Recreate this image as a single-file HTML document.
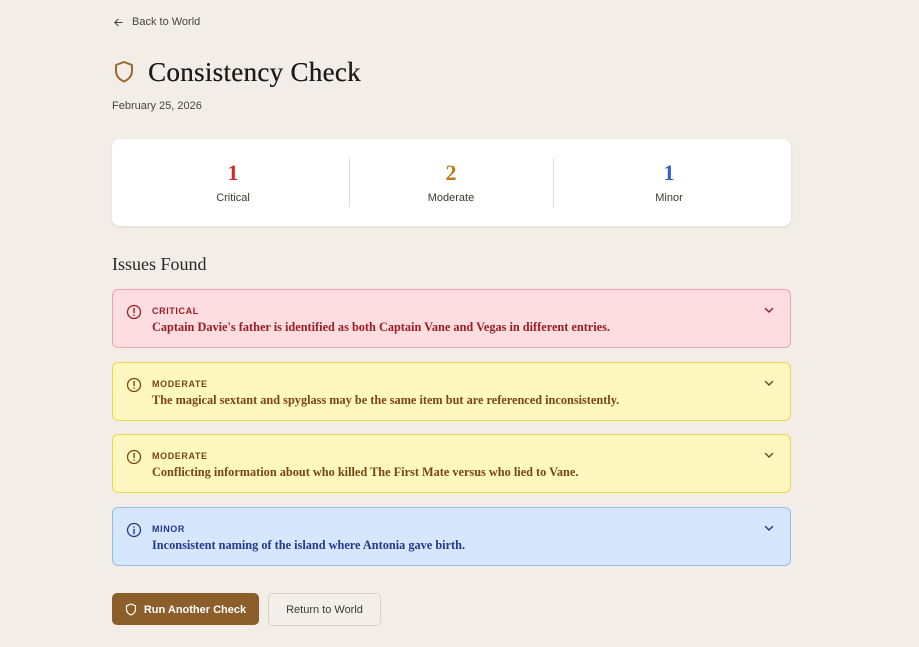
<!DOCTYPE html>
<html><head><meta charset="utf-8"><style>
*{box-sizing:border-box;margin:0;padding:0}
body{width:919px;height:647px;background:#f2eee7;font-family:"Liberation Sans",sans-serif;position:relative;overflow:hidden;color:#2a2520}
.abs{position:absolute}
.back{left:113px;top:16px;font-size:11px;color:#4a443d;display:flex;align-items:center;gap:8px}
h1{position:absolute;left:148px;top:57px;font-family:"Liberation Serif",serif;font-size:27px;font-weight:400;color:#1e1a16;letter-spacing:0.3px;text-shadow:0.3px 0 0 #1e1a16}
.date{left:112px;top:100px;font-size:11px;color:#4a443d}
.stats{left:112px;top:139px;width:679px;height:87px;background:#fff;border-radius:8px;box-shadow:0 1px 3px rgba(0,0,0,.08)}
.num{position:absolute;width:120px;text-align:center;font-family:"Liberation Serif",serif;font-weight:700;font-size:22px;top:21px}
.lab{position:absolute;width:120px;text-align:center;font-size:11px;color:#3d3832;top:53px}
.div{position:absolute;top:19px;width:1px;height:49px;background:#e2ddd5}
h2{position:absolute;left:112px;top:254px;font-family:"Liberation Serif",serif;font-weight:400;font-size:18px;color:#2a2520}
.card{position:absolute;left:112px;width:679px;height:59px;border-radius:6px;border:1px solid}
.card .t{position:absolute;left:39px;top:16px;font-size:9px;font-weight:700;letter-spacing:.6px}
.card .d{position:absolute;left:39px;top:30px;font-family:"Liberation Serif",serif;font-weight:700;font-size:12.3px}
.card svg.i{position:absolute;left:13px;top:14px}
.card svg.c{position:absolute;right:15px;top:14px}
.btn1{left:112px;top:593px;width:147px;height:32px;background:#8b5e2a;border-radius:5px;color:#fff;font-size:11px;font-weight:700;display:flex;align-items:center;justify-content:center;gap:7px;padding-top:1px}
.btn2{left:268px;top:593px;width:113px;height:33px;border:1px solid #d8d1c6;border-radius:5px;color:#3d3832;font-size:11px;display:flex;align-items:center;justify-content:center;background:#f3efe8;padding-top:1px}
</style></head><body>
<div class="abs back"><svg width="11" height="11" viewBox="0 0 12 12"><path d="M10 6H2M5.5 2.5L2 6l3.5 3.5" fill="none" stroke="#4a443d" stroke-width="1.2" stroke-linecap="round"/></svg>Back to World</div>
<svg class="abs" style="left:113px;top:60px" width="22" height="24" viewBox="0 0 22 24"><path d="M11 2L3 5v6c0 5 3.5 8.5 8 10.5 4.5-2 8-5.5 8-10.5V5z" fill="none" stroke="#9a6a2e" stroke-width="2" stroke-linejoin="round"/></svg>
<h1>Consistency Check</h1>
<div class="abs date">February 25, 2026</div>
<div class="abs stats">
<div class="num" style="left:61px;color:#d42a2a">1</div><div class="lab" style="left:61px">Critical</div>
<div class="div" style="left:237px"></div>
<div class="num" style="left:279px;color:#c07a1a">2</div><div class="lab" style="left:279px">Moderate</div>
<div class="div" style="left:441px"></div>
<div class="num" style="left:497px;color:#2f5fd0">1</div><div class="lab" style="left:497px">Minor</div>
</div>
<h2>Issues Found</h2>

<div class="card" style="top:289px;background:#fddde0;border-color:#f4a3aa;color:#9b1c22">
<svg class="i" width="16" height="16" viewBox="0 0 16 16"><circle cx="8" cy="8" r="6.5" fill="none" stroke="#9b1c22" stroke-width="1.3"/><path d="M8 4.5v4" stroke="#9b1c22" stroke-width="1.4" stroke-linecap="round"/><circle cx="8" cy="11" r=".8" fill="#9b1c22"/></svg>
<div class="t">CRITICAL</div><div class="d">Captain Davie's father is identified as both Captain Vane and Vegas in different entries.</div>
<svg class="c" width="12" height="12" viewBox="0 0 12 12"><path d="M2.5 4.5L6 8l3.5-3.5" fill="none" stroke="#9b1c22" stroke-width="1.4" stroke-linecap="round"/></svg></div>

<div class="card" style="top:362px;background:#fef7c0;border-color:#f2d34a;color:#7a4512">
<svg class="i" width="16" height="16" viewBox="0 0 16 16"><circle cx="8" cy="8" r="6.5" fill="none" stroke="#7a4512" stroke-width="1.3"/><path d="M8 4.5v4" stroke="#7a4512" stroke-width="1.4" stroke-linecap="round"/><circle cx="8" cy="11" r=".8" fill="#7a4512"/></svg>
<div class="t">MODERATE</div><div class="d">The magical sextant and spyglass may be the same item but are referenced inconsistently.</div>
<svg class="c" width="12" height="12" viewBox="0 0 12 12"><path d="M2.5 4.5L6 8l3.5-3.5" fill="none" stroke="#7a4512" stroke-width="1.4" stroke-linecap="round"/></svg></div>

<div class="card" style="top:434px;background:#fef7c0;border-color:#f2d34a;color:#7a4512">
<svg class="i" width="16" height="16" viewBox="0 0 16 16"><circle cx="8" cy="8" r="6.5" fill="none" stroke="#7a4512" stroke-width="1.3"/><path d="M8 4.5v4" stroke="#7a4512" stroke-width="1.4" stroke-linecap="round"/><circle cx="8" cy="11" r=".8" fill="#7a4512"/></svg>
<div class="t">MODERATE</div><div class="d">Conflicting information about who killed The First Mate versus who lied to Vane.</div>
<svg class="c" width="12" height="12" viewBox="0 0 12 12"><path d="M2.5 4.5L6 8l3.5-3.5" fill="none" stroke="#7a4512" stroke-width="1.4" stroke-linecap="round"/></svg></div>

<div class="card" style="top:507px;background:#d6e6fd;border-color:#93bdf5;color:#1f3a8f">
<svg class="i" width="16" height="16" viewBox="0 0 16 16"><circle cx="8" cy="8" r="6.5" fill="none" stroke="#1f3a8f" stroke-width="1.3"/><path d="M8 7.5v4" stroke="#1f3a8f" stroke-width="1.4" stroke-linecap="round"/><circle cx="8" cy="5" r=".8" fill="#1f3a8f"/></svg>
<div class="t">MINOR</div><div class="d">Inconsistent naming of the island where Antonia gave birth.</div>
<svg class="c" width="12" height="12" viewBox="0 0 12 12"><path d="M2.5 4.5L6 8l3.5-3.5" fill="none" stroke="#1f3a8f" stroke-width="1.4" stroke-linecap="round"/></svg></div>

<div class="abs btn1"><svg width="12" height="13" viewBox="0 0 12 13"><path d="M6 1L1.5 2.8v3.4c0 2.8 2 4.7 4.5 5.8 2.5-1.1 4.5-3 4.5-5.8V2.8z" fill="none" stroke="#fff" stroke-width="1.2" stroke-linejoin="round"/></svg>Run Another Check</div>
<div class="abs btn2">Return to World</div>
</body></html>
